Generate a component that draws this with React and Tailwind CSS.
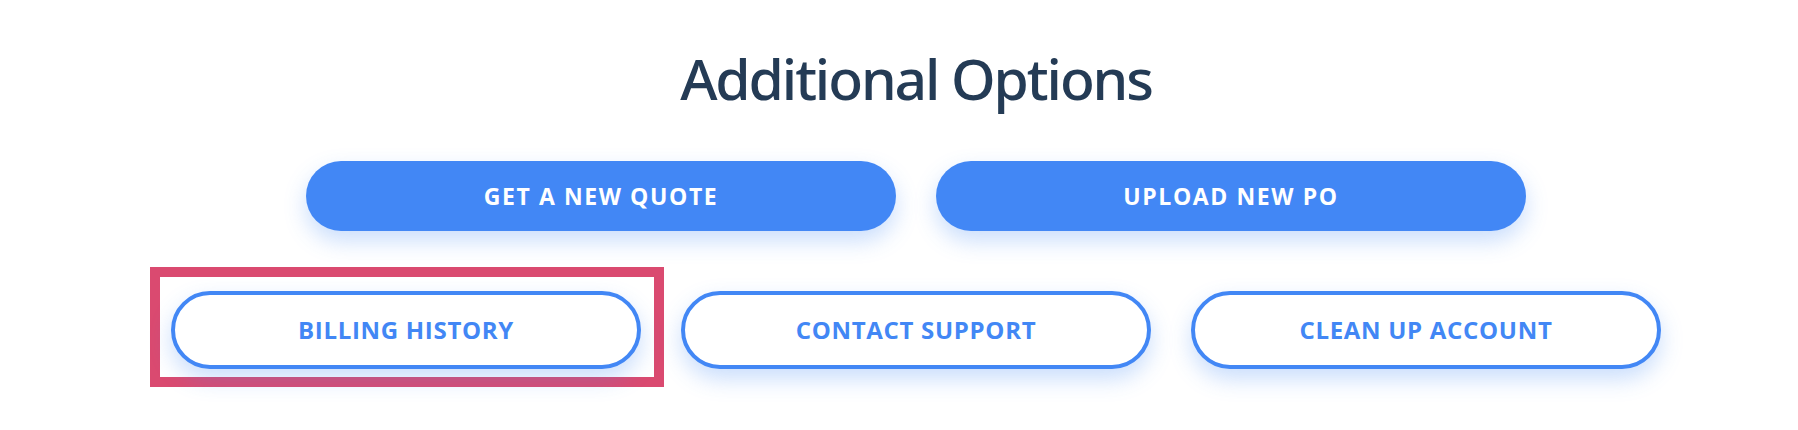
import React from 'react'

const font = { fontFamily: '"Open Sans", "Noto Sans", sans-serif' }

const primary = ['GET A NEW QUOTE', 'UPLOAD NEW PO']
const secondary = ['BILLING HISTORY', 'CONTACT SUPPORT', 'CLEAN UP ACCOUNT']

const App = () => {
  return (
    <div className="w-[1798px] h-[430px] bg-white overflow-hidden" style={font}>
      <div className="flex flex-col items-center pl-[34px] pt-[43px]">
        <h2 className="text-[57px] leading-[70px] font-medium tracking-[-2.1px] text-[#243b55] font-['Noto_Sans',sans-serif]">Additional Options</h2>

        {/* Primary actions */}
        <div className="flex gap-[40px] mt-[48px]">
          {primary.map((label) => (
            <button
              key={label}
              type="button"
              className="w-[590px] h-[70px] rounded-full bg-[#4287f5] text-white text-[23px] font-bold tracking-[1.6px] shadow-[0_10px_22px_rgba(66,135,245,0.28)]"
            >
              {label}
            </button>
          ))}
        </div>

        {/* Secondary actions */}
        <div className="flex gap-[40px] mt-[60px]">
          {secondary.map((label, i) => (
            <div key={label} className="relative">
              {i === 0 && (
                <div className="absolute -left-[21px] -top-[24px] w-[514px] h-[120px] border-[10px] border-[#da4a70] pointer-events-none" />
              )}
              <button
                type="button"
                className="relative w-[470px] h-[78px] rounded-full bg-white border-4 border-[#4287f5] text-[#4287f5] text-[24px] font-bold tracking-[0.7px] shadow-[0_10px_22px_rgba(66,135,245,0.28)]"
              >
                {label}
              </button>
            </div>
          ))}
        </div>
      </div>
    </div>
  )
}

export default App
